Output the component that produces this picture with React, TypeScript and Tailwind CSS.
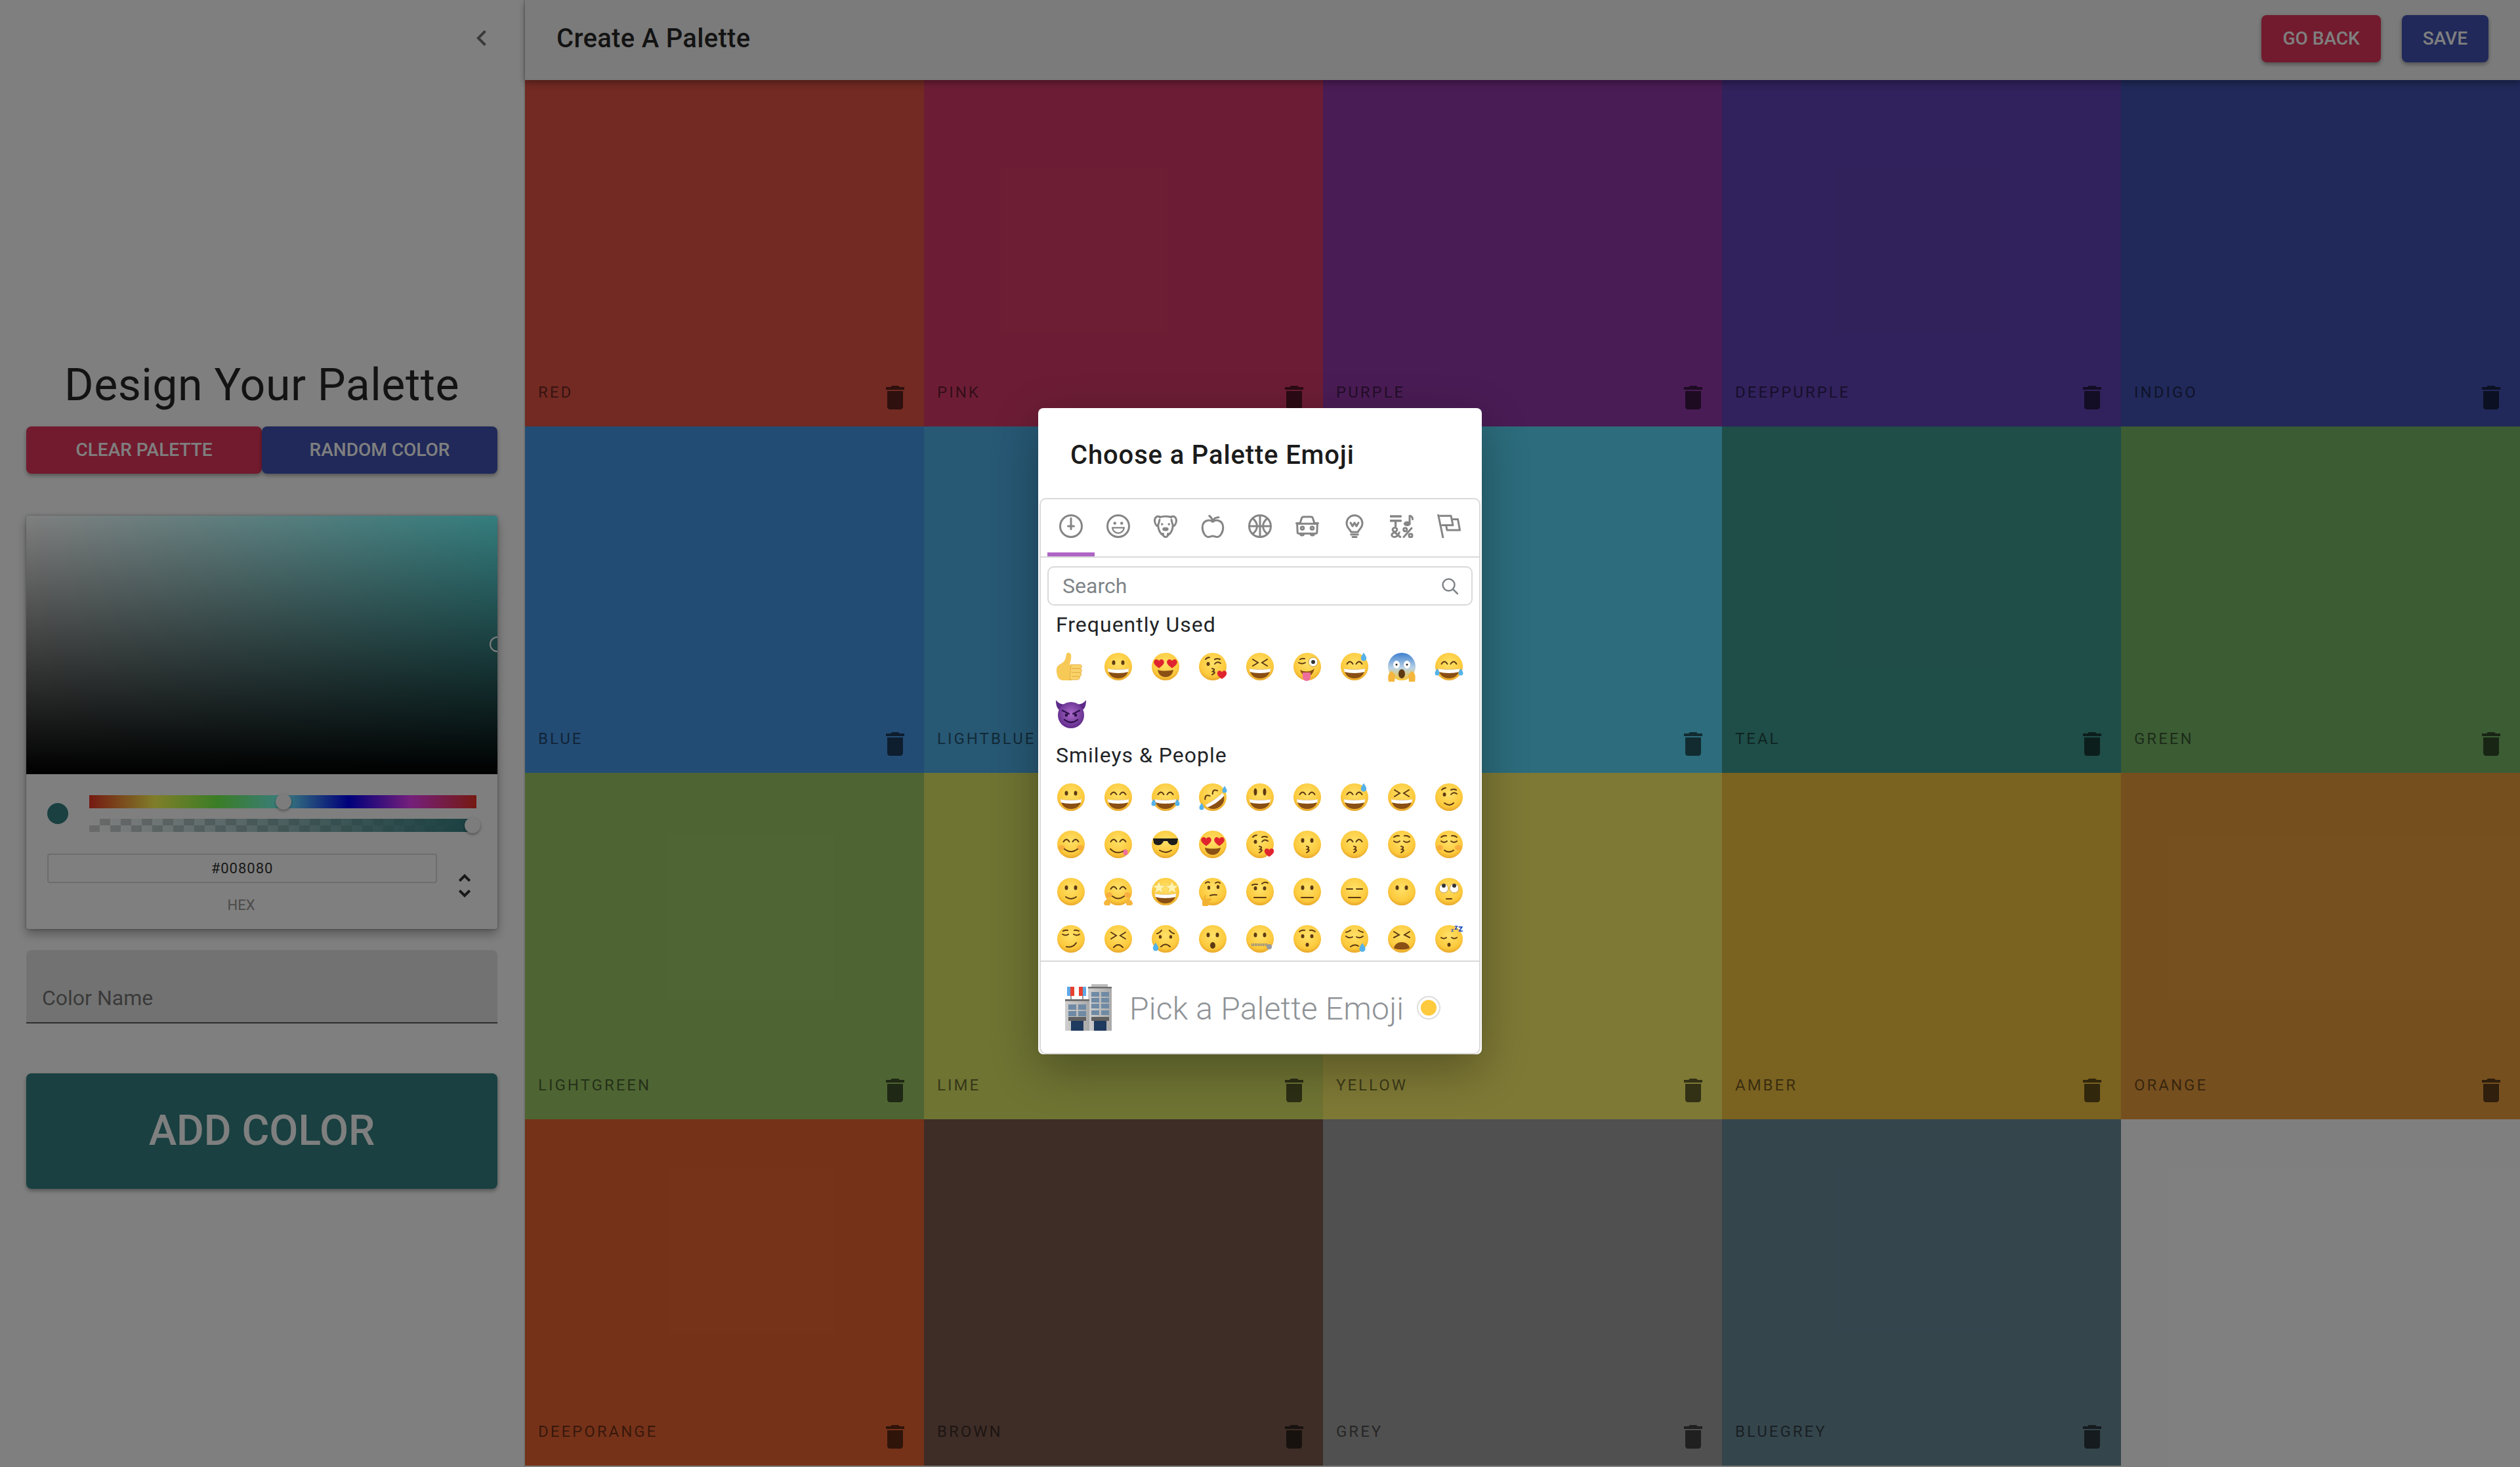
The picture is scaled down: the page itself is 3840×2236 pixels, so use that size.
import React, { useId } from 'react';

const cells = [
  { name: 'RED', color: '#e55446' },
  { name: 'PINK', color: '#d93b6a' },
  { name: 'PURPLE', color: '#9438aa' },
  { name: 'DEEPPURPLE', color: '#6243b8' },
  { name: 'INDIGO', color: '#4052b2' },
  { name: 'BLUE', color: '#4698ea' },
  { name: 'LIGHTBLUE', color: '#4fb0e8' },
  { name: 'CYAN', color: '#58d8f8' },
  { name: 'TEAL', color: '#3f9a90' },
  { name: 'GREEN', color: '#78b968' },
  { name: 'LIGHTGREEN', color: '#9dcb67' },
  { name: 'LIME', color: '#dfe867' },
  { name: 'YELLOW', color: '#fdf26a' },
  { name: 'AMBER', color: '#f4c440' },
  { name: 'ORANGE', color: '#ed9f3f' },
  { name: 'DEEPORANGE', color: '#eb6532' },
  { name: 'BROWN', color: '#7c5a4e' },
  { name: 'GREY', color: '#a0a0a0' },
  { name: 'BLUEGREY', color: '#6a8a99' },
];

const BR = '#5d3a14';
const line = { fill: 'none', stroke: BR, strokeWidth: 2, strokeLinecap: 'round' as const };

const Heart = ({ x, y, s = 1 }: { x: number; y: number; s?: number }) => (
  <path
    transform={`translate(${x} ${y}) scale(${s})`}
    d="M0-2c-2-3.2-6-2-6 1.5 0 3 4 5.5 6 7 2-1.5 6-4 6-7C6-4 2-5.2 0-2z"
    fill="#e0242f"
  />
);
const Tear = ({ x, y, s = 1 }: { x: number; y: number; s?: number }) => (
  <path
    transform={`translate(${x} ${y}) scale(${s})`}
    d="M0-6C2-3 3.5-1 3.5 1a3.5 3.5 0 0 1-7 0C-3.5-1-2-3 0-6z"
    fill="#55b2ea"
  />
);

const dots = (
  <>
    <ellipse cx="17" cy="18" rx="2.5" ry="3.5" fill={BR} />
    <ellipse cx="31" cy="18" rx="2.5" ry="3.5" fill={BR} />
  </>
);
const arcs = <path d="M12.5 20q4.5-7 9 0M26.5 20q4.5-7 9 0" {...line} />;
const xEyes = <path d="M13 13l8 5-8 5M35 13l-8 5 8 5" {...line} />;
const closed = <path d="M12 19q4.5 3.5 9 0M27 19q4.5 3.5 9 0" {...line} />;
const brows = <path d="M12 13q4-3 8-2M28 11q4-1 8 2" {...line} />;
const grin = (
  <>
    <path d="M8 27c5 2 27 2 32 0-.5 9-7 15-16 15S8.5 36 8 27z" fill="#8a4f14" />
    <path d="M8 27c5 2 27 2 32 0l-.5 5c-8 2.5-23 2.5-31 0z" fill="#fff" />
  </>
);
const smile = <path d="M14 31q10 8 20 0" {...line} />;
const flat = <path d="M15 33h18" {...line} />;
const kiss = <path d="M23 27q6 1 1 4.5q6 1-1 5" {...line} />;
const cheeks = (
  <>
    <ellipse cx="10" cy="29" rx="5" ry="4" fill="#f59a3c" opacity=".6" />
    <ellipse cx="38" cy="29" rx="5" ry="4" fill="#f59a3c" opacity=".6" />
  </>
);
const oMouth = <ellipse cx="24" cy="34" rx="4" ry="5" fill={BR} />;
const smallO = <ellipse cx="24" cy="33" rx="2.5" ry="3" fill={BR} />;
const winkEyes = (
  <>
    <ellipse cx="17" cy="20" rx="2.5" ry="3" fill={BR} />
    <path d="M27 20q4-5 9-1M27 13q4-2 8 0M13 13q2-3 6-3" {...line} />
  </>
);

const faces: Record<string, React.ReactNode> = {
  grinning: <>{dots}{grin}</>,
  grin: <>{arcs}{grin}</>,
  smile: <>{arcs}{grin}</>,
  joy: <>{arcs}{grin}<Tear x={6} y={33} /><Tear x={42} y={33} /></>,
  rofl: (
    <>
      <g transform="rotate(-35 24 24)">{arcs}{grin}</g>
      <Tear x={7} y={39} /><Tear x={42} y={13} />
    </>
  ),
  smiley: <><ellipse cx="17" cy="16" rx="2.5" ry="5.5" fill={BR} /><ellipse cx="31" cy="16" rx="2.5" ry="5.5" fill={BR} />{grin}</>,
  sweat: <>{arcs}{grin}<Tear x={38} y={10} s={1.2} /></>,
  laughing: <>{xEyes}{grin}</>,
  wink: <>{winkEyes}<path d="M17 33q8 6 14 0" {...line} /></>,
  blush: <>{cheeks}{arcs}{smile}</>,
  yum: <>{arcs}<path d="M12 31q10 10 22 2" {...line} /><ellipse cx="35" cy="36" rx="3.5" ry="4.5" fill="#ee6f9c" /></>,
  cool: (
    <>
      <path d="M5 15h38l-1 6c-1 5-11 6-14 0l-1-2h-6l-1 2c-3 6-13 5-14 0z" fill="#1c1c1c" />
      <path d="M15 33q9 6 18 0" {...line} />
    </>
  ),
  hearts: <><Heart x={14} y={18} s={1.3} /><Heart x={34} y={18} s={1.3} /><path d="M12 29c6 2 18 2 24 0-1 7-6 11-12 11s-11-4-12-11z" fill="#8a4f14" /></>,
  kissHeart: <>{winkEyes}{kiss}<Heart x={38} y={35} s={1.2} /></>,
  kissing: <>{dots}{kiss}</>,
  kissingSmile: <>{arcs}{kiss}</>,
  kissingClosed: <>{brows}{closed}{kiss}</>,
  relaxed: <>{cheeks}{brows}{closed}<path d="M17 33q7 5 14 0" {...line} /></>,
  slight: <>{dots}<path d="M16 32q8 6 16 0" {...line} /></>,
  hug: (
    <>
      {cheeks}{arcs}<path d="M15 31q9 7 18 0" {...line} />
      <path d="M2 43c0-5 4-8 8-7l3 3-2 6H4zM46 43c0-5-4-8-8-7l-3 3 2 6h7z" fill="#f5b63d" />
    </>
  ),
  star: (
    <>
      {grin}
      <path d="M14 8l2.5 6.5 7 .5-5.5 4.5 2 7-6-4-6 4 2-7L4 15l7-.5zM34 8l2.5 6.5 7 .5-5.5 4.5 2 7-6-4-6 4 2-7L24 15l7-.5z" fill="#fff3b0" stroke="#e8c65b" strokeWidth=".6" />
    </>
  ),
  thinking: (
    <>
      <ellipse cx="18" cy="18" rx="2.2" ry="3" fill={BR} /><ellipse cx="32" cy="17" rx="2.2" ry="3" fill={BR} />
      <path d="M13 11q3-3 6-1M28 11q4-3 7 0M20 30q6-2 10-1" {...line} />
      <path d="M9 46c-2-3-1-9 1-12l2-5 2 1-1 5 8-1 1 3-4 2 1 5-3 2z" fill="#f2b233" />
    </>
  ),
  brow: <><ellipse cx="17" cy="19" rx="2.5" ry="3" fill={BR} /><ellipse cx="31" cy="19" rx="2.5" ry="3" fill={BR} /><path d="M12 14q4-2 8-1M27 12q4-4 9-1" {...line} />{flat}</>,
  neutral: <>{dots}{flat}</>,
  blank: <><path d="M12 20h9M27 20h9" {...line} />{flat}</>,
  mute: dots,
  roll: (
    <>
      <circle cx="16" cy="19" r="7" fill="#fff" stroke="#c99a3a" /><circle cx="32" cy="19" r="7" fill="#fff" stroke="#c99a3a" />
      <circle cx="16" cy="15" r="3" fill="#333" /><circle cx="32" cy="15" r="3" fill="#333" />
      <path d="M20 35h8" {...line} />
    </>
  ),
  smirk: <><path d="M11 17q5 3 9 0M28 17q5 3 9 0M12 12q4-2 7-1M29 11q4-1 7 1M17 36q10 2 15-6" {...line} /></>,
  confounded: <><path d="M13 14l8 5-8 5M35 14l-8 5 8 5M17 37q7-8 14 0" {...line} /></>,
  sad: <><ellipse cx="16" cy="21" rx="2.2" ry="2.8" fill={BR} /><ellipse cx="32" cy="21" rx="2.2" ry="2.8" fill={BR} /><path d="M11 16q4-1 7-5M37 16q-4-1-7-5M17 36q7-7 14 0" {...line} /><Tear x={9} y={37} s={1.2} /></>,
  open: <>{dots}{oMouth}</>,
  zipper: (
    <>
      {dots}
      <path d="M11 33h24" stroke="#8b8b8b" strokeWidth="4" strokeDasharray="1.5 1" />
      <circle cx="38" cy="36" r="4" fill="#9a9a9a" />
    </>
  ),
  hushed: <>{brows}<ellipse cx="17" cy="20" rx="2.5" ry="3" fill={BR} /><ellipse cx="31" cy="20" rx="2.5" ry="3" fill={BR} />{smallO}</>,
  sleepy: <><path d="M11 14q4-1 7-3M37 14q-4-1-7-3M11 20q5 4 10 1M27 21q5 3 10-1M18 36q6-5 12-1" {...line} /><Tear x={36} y={38} s={1.3} /></>,
  tired: <><path d="M12 13l8 5-8 4M36 13l-8 5 8 4" {...line} /><path d="M12 38c2-12 22-12 24 0-4 3-20 3-24 0z" fill="#8a4f14" /></>,
  sleeping: (
    <>
      <path d="M12 22q4 3 8 0M28 22q4 3 8 0" {...line} />{smallO}
      <text x="27" y="13" fontSize="8" fontWeight="700" fill="#2a4fb8">z</text>
      <text x="32" y="10" fontSize="11" fontWeight="700" fill="#2a4fb8">z</text>
      <text x="38" y="13" fontSize="14" fontWeight="700" fill="#2a4fb8">z</text>
    </>
  ),
  wacky: (
    <>
      <path d="M11 18q5 3 10 0M13 13q3-2 7-1" {...line} />
      <circle cx="33" cy="17" r="7" fill="#fff" stroke="#c99a3a" /><circle cx="33" cy="17" r="3" fill="#333" />
      <path d="M13 29q12 6 22-2-3 12-11 12t-11-10z" fill="#8a4f14" />
      <path d="M17 33h12v7a6 6 0 0 1-12 0z" fill="#ee6f9c" />
    </>
  ),
  scream: (
    <>
      <ellipse cx="16" cy="21" rx="5" ry="6" fill="#fff" /><ellipse cx="32" cy="21" rx="5" ry="6" fill="#fff" />
      <circle cx="16" cy="21" r="1.5" fill="#222" /><circle cx="32" cy="21" r="1.5" fill="#222" />
      <ellipse cx="24" cy="35" rx="5" ry="7" fill="#5d3a14" />
      <path d="M4 47c-2-8 0-15 5-16l5 6-1 10zM44 47c2-8 0-15-5-16l-5 6 1 10z" fill="#f5b63d" />
    </>
  ),
};

const Emoji = ({ name }: { name: string }) => {
  const id = useId();
  const isScream = name === 'scream';
  return (
    <svg viewBox="0 0 48 48" className="h-12 w-12 overflow-visible">
      <defs>
        <radialGradient id={id} cx="50%" cy="38%" r="62%">
          <stop offset="0%" stopColor={isScream ? '#fde27a' : '#ffe168'} />
          <stop offset="76%" stopColor={isScream ? '#f8cf60' : '#fcc93c'} />
          <stop offset="100%" stopColor="#e8a72a" />
        </radialGradient>
        <linearGradient id={`${id}s`} x1="0" y1="0" x2="0" y2="1">
          <stop offset="0%" stopColor="#3e7fcf" />
          <stop offset="55%" stopColor="#b9d3e6" />
          <stop offset="100%" stopColor="#fbc531" />
        </linearGradient>
      </defs>
      <circle cx="24" cy="24" r="21" fill={isScream ? `url(#${id}s)` : `url(#${id})`} />
      {faces[name]}
    </svg>
  );
};

const Thumb = () => (
  <svg viewBox="0 0 48 48" className="h-12 w-12">
    <path d="M3 24c3-4 9-5 11-9 2-3 2-6 3-10 1-3 6-3 7 1 1 5-1 10-2 15h4v24H13c-4 0-8-2-9-5-2-5-3-11-1-16z" fill="#f7c956" />
    <path d="M24 21h14c3 0 3 6 0 6 3 0 3 6 0 6 3 0 2 6-1 6 1 2 0 5-3 5H22z" fill="#f9d36a" stroke="#dfa63a" strokeWidth=".8" />
    <path d="M25 27h13M25 33h13M25 39h12" stroke="#dfa63a" strokeWidth="1.2" />
  </svg>
);

const Devil = () => {
  const id = useId();
  return (
    <svg viewBox="0 0 48 48" className="h-12 w-12">
      <defs>
        <radialGradient id={id} cx="50%" cy="45%" r="60%">
          <stop offset="0%" stopColor="#ab6ac9" />
          <stop offset="100%" stopColor="#5a2686" />
        </radialGradient>
      </defs>
      <path d="M1 3c0 9 2 14 8 17l8-10C10 10 5 8 1 3zM47 3c0 9-2 14-8 17l-8-10c7 0 12-2 16-7z" fill="#5d2a8a" />
      <circle cx="24" cy="26" r="20" fill={`url(#${id})`} />
      <path d="M11 19l10 5M37 19l-10 5M14 33q10 8 20 0" fill="none" stroke="#2d0f4c" strokeWidth="2.2" strokeLinecap="round" />
      <circle cx="17" cy="26" r="2.4" fill="#2d0f4c" /><circle cx="31" cy="26" r="2.4" fill="#2d0f4c" />
    </svg>
  );
};

const frequent = ['thumb', 'grinning', 'hearts', 'kissHeart', 'laughing', 'wacky', 'sweat', 'scream', 'joy', 'devil'];
const smileys = [
  'grinning', 'grin', 'joy', 'rofl', 'smiley', 'smile', 'sweat', 'laughing', 'wink',
  'blush', 'yum', 'cool', 'hearts', 'kissHeart', 'kissing', 'kissingSmile', 'kissingClosed', 'relaxed',
  'slight', 'hug', 'star', 'thinking', 'brow', 'neutral', 'blank', 'mute', 'roll',
  'smirk', 'confounded', 'sad', 'open', 'zipper', 'hushed', 'sleepy', 'tired', 'sleeping',
];

const EmojiCell = ({ name }: { name: string }) => (
  <div className="flex h-[72px] w-[72px] items-center justify-center">
    {name === 'thumb' ? <Thumb /> : name === 'devil' ? <Devil /> : <Emoji name={name} />}
  </div>
);

const tabIcons: React.ReactNode[] = [
  <>
    <circle cx="12" cy="12" r="11" />
    <path d="M12 4v11M9 12h6" />
  </>,
  <>
    <circle cx="12" cy="12" r="11" />
    <circle cx="8.5" cy="9" r="1.5" fill="#858585" stroke="none" />
    <circle cx="15.5" cy="9" r="1.5" fill="#858585" stroke="none" />
    <path d="M6 13.5h12c-.5 3.5-3 5.5-6 5.5s-5.500-2-6-5.500z" strokeWidth="1.5" />
  </>,
  <>
    <path d="M6.5 2.5C3.5 1 .8 3 1 6.5c.2 2.5 1.5 5 3 5.5 1-2 1.5-4 2-6.5M17.5 2.5C20.5 1 23.2 3 23 6.5c-.2 2.5-1.5 5-3 5.5-1-2-1.5-4-2-6.5" />
    <path d="M6 3c3.5-1.2 8.5-1.2 12 0M4.5 11c0 5 2.5 9 5 10M19.5 11c0 5-2.5 9-5 10" />
    <circle cx="8.5" cy="10" r="1.2" fill="#858585" stroke="none" />
    <circle cx="15.5" cy="10" r="1.2" fill="#858585" stroke="none" />
    <ellipse cx="12" cy="15" rx="3.2" ry="2" fill="#858585" stroke="none" />
    <path d="M9.5 19.5c0 2.5 1.2 3.5 2.5 3.5s2.5-1 2.500-3.500" />
  </>,
  <>
    <path d="M12 7.5C9 5 1.800 5.500 1.500 13c-.2 5 3 10 6 10 2 0 3-1 4.500-1s2.500 1 4.500 1c3 0 6.200-5 6-10-.3-7.500-7.500-8-10.500-5.500z" />
    <path d="M12 7c-.5-2-1.500-4-3.500-5.500M12 6.500c1-2 3-3.500 6-3.500" />
  </>,
  <>
    <circle cx="12" cy="12" r="11" />
    <path d="M12 1v22M1 12h22M4.500 4c3 2.500 4.500 5 4.500 8s-1.500 5.500-4.500 8M19.500 4c-3 2.500-4.500 5-4.500 8s1.500 5.500 4.500 8" />
  </>,
  <>
    <path d="M4.500 9.500l1.800-5.500c.3-1 1-1.500 2-1.500h7.400c1 0 1.700.5 2 1.500l1.800 5.500" />
    <path d="M3 9.500h18c.7 0 1.200.5 1.200 1.200l-.3 7.300c0 1-.6 1.500-1.400 1.500h-17c-.8 0-1.400-.5-1.400-1.500l-.3-7.300c0-.7.5-1.200 1.200-1.200z" />
    <circle cx="7" cy="14" r="1.5" /><circle cx="17" cy="14" r="1.5" />
    <path d="M5 19.500c0 2.500 3.500 2.500 3.500 0M15.500 19.500c0 2.500 3.500 2.500 3.500 0M1 9h2.500M20.500 9H23" />
  </>,
  <>
    <path d="M8.500 18c-.5-2.500-4.500-4-4.500-9a8 8 0 1 1 16 0c0 5-4 6.500-4.500 9z" />
    <path d="M8 8.500l2 3.500 2-3.500 2 3.500 2-3.500M8.500 20.500h7M10 23h4" />
  </>,
  <>
    <path d="M.5 2h10.500M.5 6.500h10.500M5.700 7v5" strokeWidth="2.2" />
    <path d="M20 9.500V1.500c1.500 0 3 1.200 3 3.500" />
    <ellipse cx="17.5" cy="9.5" rx="3.5" ry="2.5" fill="#858585" stroke="none" />
    <path d="M10.500 23L3.500 17c-1.500-1.500-.5-3.500 1.500-3.500s3 2 1.500 3.500L2.500 19.500c-1.500 2 0 3.500 2 3.500 2.500 0 4-2 5-4.500" />
    <path d="M22 14L14 23" />
    <circle cx="15.5" cy="15.5" r="1.7" /><circle cx="21" cy="21.5" r="1.7" />
  </>,
  <>
    <path d="M1 0l5 24" />
    <path d="M3 1.500h11l2 9.500H5M16 5h5l2 11H10l-.8-4" />
  </>,
];

const Building = () => (
  <svg viewBox="0 0 72 72" className="h-[72px] w-[72px] shrink-0">
    <defs>
      <linearGradient id="towerWall" x1="0" y1="0" x2="1" y2="0">
        <stop offset="0%" stopColor="#cfcfcf" />
        <stop offset="100%" stopColor="#a9a9a9" />
      </linearGradient>
    </defs>
    <rect x="40" y="0" width="25" height="5" fill="#bdbdbd" />
    <rect x="35" y="4" width="36" height="67" fill="url(#towerWall)" />
    <rect x="35" y="4" width="36" height="2.5" fill="#6f6f6f" />
    <rect x="0" y="23" width="37" height="48" fill="url(#towerWall)" />
    <rect x="0" y="23" width="37" height="3" fill="#6f6f6f" />
    <rect x="3" y="4" width="29" height="14" fill="#fff" />
    <rect x="3" y="4" width="5" height="14" fill="#5fa8e6" />
    <rect x="8" y="4" width="6" height="14" fill="#e8402f" />
    <rect x="21" y="4" width="6" height="14" fill="#e8402f" />
    <rect x="27" y="4" width="5" height="14" fill="#5fa8e6" />
    <path d="M9 18v5M27 18v5" stroke="#777" strokeWidth="1.5" />
    {[31, 41].map((y) => (
      <g key={y} fill="#6f8aa4">
        <rect x="5" y={y} width="12" height="8" />
        <rect x="20" y={y} width="12" height="8" />
      </g>
    ))}
    {[12, 21, 30, 40].map((y) => (
      <g key={y} fill="#6f8aa4">
        <rect x="40" y={y} width="12" height="7" />
        <rect x="55" y={y} width="12" height="7" />
      </g>
    ))}
    <rect x="5" y="50" width="27" height="6" fill="#5f5f5f" />
    <rect x="40" y="50" width="27" height="6" fill="#5f5f5f" />
    <rect x="9" y="56" width="19" height="15" fill="#1f3a5f" />
    <rect x="44" y="56" width="19" height="15" fill="#1f3a5f" />
  </svg>
);

const TrashIcon = () => (
  <svg viewBox="0 0 24 24" className="h-12 w-12" fill="currentColor">
    <path d="M6 19c0 1.100.9 2 2 2h8c1.100 0 2-.9 2-2V7H6v12zM19 4h-3.500l-1-1h-5l-1 1H5v2h14V4z" />
  </svg>
);

const ColorCell = ({ name, color }: { name: string; color: string }) => (
  <div className="relative flex items-end p-5" style={{ backgroundColor: color }}>
    <span className="mb-[20px] text-[24px] leading-none tracking-[3px] text-black/55">{name}</span>
    <span className="absolute right-5 bottom-5 text-black/60">
      <TrashIcon />
    </span>
  </div>
);

const EmojiDialog = () => (
  <div className="absolute inset-0 z-20 flex items-center justify-center bg-black/50 pb-[7px]">
    <div className="h-[985px] w-[676px] rounded-lg bg-white shadow-[0_22px_70px_rgba(0,0,0,0.3)]">
      <div className="flex h-[137px] items-center pt-[6px] pl-[49px] text-[40px] font-medium tracking-[0.85px] text-[#1b1b1b]">
        Choose a Palette Emoji
      </div>
      <div className="mx-[2px] h-[848px] overflow-hidden rounded-[10px] border-2 border-[#d9d9d9]">
        <div className="flex h-[89px] border-b-2 border-[#d9d9d9] px-[10px]">
          {tabIcons.map((icon, i) => (
            <div key={i} className="relative flex h-full w-[72px] justify-center pt-[23px]">
              <svg viewBox="0 0 24 24" className="h-9 w-9" fill="none" stroke="#858585" strokeWidth="2" strokeLinecap="round" strokeLinejoin="round">
                {icon}
              </svg>
              {i === 0 && <div className="absolute right-0 bottom-0 left-0 h-[6px] bg-[#ae65c5]" />}
            </div>
          ))}
        </div>
        <div className="mx-[10px] mt-[13px] flex h-[60px] items-center rounded-[10px] border-2 border-[#d9d9d9] pr-[20px] pl-[21px]">
          <input placeholder="Search" className="min-w-0 flex-1 bg-transparent text-[32px] outline-none placeholder:text-[#7f8488]" />
          <svg viewBox="0 0 25 25" className="h-[25px] w-[25px]" fill="none" stroke="#7f8488" strokeWidth="2.5" strokeLinecap="round">
            <circle cx="10.5" cy="10.5" r="9" />
            <path d="M17 17l7 7" />
          </svg>
        </div>
        <div className="h-[541px] overflow-hidden px-[10px]">
          <div className="mt-[2px] h-[55px] pl-[13px] text-[32px] leading-[55px] tracking-[1px] text-[#222427]">Frequently Used</div>
          <div className="grid grid-cols-9">
            {frequent.map((name, i) => (
              <EmojiCell key={i} name={name} />
            ))}
          </div>
          <div className="h-[55px] pl-[13px] text-[32px] leading-[55px] tracking-[1px] text-[#222427]">Smileys &amp; People</div>
          <div className="grid grid-cols-9">
            {smileys.map((name, i) => (
              <EmojiCell key={i} name={name} />
            ))}
          </div>
        </div>
        <div className="flex h-[141px] items-center border-t-2 border-[#d9d9d9] pl-[37px]">
          <Building />
          <span className="mt-[4px] ml-[26px] text-[48px] font-light tracking-[0.2px] text-[#8f9397]">Pick a Palette Emoji</span>
          <span className="ml-[20px] flex h-9 w-9 items-center justify-center rounded-full border-2 border-[#dddddd]">
            <span className="h-6 w-6 rounded-full bg-[#ffca3e]" />
          </span>
        </div>
      </div>
    </div>
  </div>
);

const ChromePicker = () => (
  <div className="mt-16 h-[630px] overflow-hidden rounded-[4px] bg-white shadow-[0_0_4px_rgba(0,0,0,0.3),0_8px_16px_rgba(0,0,0,0.3)]">
    <div className="relative h-[394px] bg-[#69fbfd] bg-[linear-gradient(to_top,#000,transparent),linear-gradient(to_right,#fff,transparent)]">
      <div className="absolute top-[184px] right-[-12px] h-6 w-6 rounded-full border-2 border-white" />
    </div>
    <div className="flex px-8 pt-8">
      <div className="w-16 pt-3">
        <div className="h-8 w-8 rounded-full bg-[#348082]" />
      </div>
      <div className="flex-1">
        <div className="relative h-5 bg-[linear-gradient(to_right,#ea3323,#fffd54_17%,#75fb4c_33%,#74fbfd_50%,#0000f5_67%,#ea3ff7_83%,#ea3323)]">
          <div className="absolute top-[-2px] left-[284px] h-6 w-6 rounded-full bg-[#f8f8f8] shadow-[0_2px_4px_rgba(0,0,0,0.37)]" />
        </div>
        <div className="relative mt-4 h-5 bg-white bg-[repeating-conic-gradient(#d4d4d4_0_25%,#fff_0_50%)] bg-[length:32px_20px]">
          <div className="h-full bg-[linear-gradient(to_right,transparent,#348082)]" />
          <div className="absolute top-[-2px] right-[-6px] h-6 w-6 rounded-full bg-[#f8f8f8] shadow-[0_2px_4px_rgba(0,0,0,0.37)]" />
        </div>
      </div>
    </div>
    <div className="flex px-8 pt-[33px]">
      <div className="w-[594px] shrink-0 text-center">
        <input
          readOnly
          value="#008080"
          className="h-[45px] w-full rounded-[4px] border-2 border-[#dadada] text-center text-[22px] tracking-[1px] text-[#333] outline-none"
        />
        <div className="mt-[21px] pr-[3px] text-[22px] leading-[26px] text-[#969696]">HEX</div>
      </div>
      <svg viewBox="0 0 24 24" className="mt-[25px] ml-[18px] h-12 w-12 shrink-0" fill="#333">
        <path d="M12 5.830L15.170 9L16.580 7.590L12 3L7.410 7.590L8.830 9L12 5.830Z" />
        <path d="M12 18.170L8.830 15L7.420 16.410L12 21L16.590 16.410L15.170 15Z" />
      </svg>
    </div>
  </div>
);

export default function App() {
  return (
    <div className="relative flex h-[2236px] w-[3840px] overflow-hidden bg-white font-[Roboto,sans-serif]">
      <aside className="w-[800px] shrink-0 border-r-2 border-black/10">
        <div className="flex h-[122px] items-start justify-end pt-[34px] pr-[40px] text-black/55">
          <svg viewBox="0 0 24 24" className="h-12 w-12" fill="currentColor">
            <path d="M15.410 7.410L14 6l-6 6 6 6 1.410-1.410L10.830 12z" />
          </svg>
        </div>
        <div className="mt-[423px] px-10">
          <h1 className="h-[84px] text-center text-[68px] leading-[84px] tracking-[0.5px] text-black/85">Design Your Palette</h1>
          <div className="mt-[21px] flex">
            <button className="h-[72px] flex-1 rounded-lg bg-[#e4365c] text-[28px] font-medium text-white shadow-[0_3px_6px_rgba(0,0,0,0.35)]">
              CLEAR PALETTE
            </button>
            <button className="h-[72px] flex-1 rounded-lg bg-[#4153b3] text-[28px] font-medium text-white shadow-[0_3px_6px_rgba(0,0,0,0.35)]">
              RANDOM COLOR
            </button>
          </div>
          <ChromePicker />
          <div className="mt-8 flex h-[112px] items-end rounded-t-lg border-b-2 border-black/60 bg-black/10 pb-[13px] pl-6">
            <input placeholder="Color Name" className="w-full bg-transparent text-[32px] outline-none placeholder:text-black/50" />
          </div>
          <button className="mt-[76px] h-[176px] w-full rounded-lg bg-[#348082] text-[64px] font-medium text-white shadow-[0_3px_6px_rgba(0,0,0,0.35)]">
            ADD COLOR
          </button>
        </div>
      </aside>
      <main className="flex min-w-0 flex-1 flex-col">
        <header className="relative z-10 flex h-[122px] shrink-0 items-center gap-8 bg-[#f7f7f7] px-12 pb-[5px] shadow-[0_4px_10px_rgba(0,0,0,0.35)]">
          <h2 className="flex-1 text-[40px] font-medium tracking-[0.3px] text-black/85">Create A Palette</h2>
          <button className="h-[72px] rounded-lg bg-[#e4365c] px-8 text-[28px] font-medium text-white shadow-[0_3px_6px_rgba(0,0,0,0.35)]">
            GO BACK
          </button>
          <button className="h-[72px] rounded-lg bg-[#4153b3] px-8 text-[28px] font-medium text-white shadow-[0_3px_6px_rgba(0,0,0,0.35)]">
            SAVE
          </button>
        </header>
        <div className="grid flex-1 grid-cols-5 grid-rows-[repeat(4,528px)]">
          {cells.map((cell) => (
            <ColorCell key={cell.name} name={cell.name} color={cell.color} />
          ))}
        </div>
      </main>
      <EmojiDialog />
    </div>
  );
}
